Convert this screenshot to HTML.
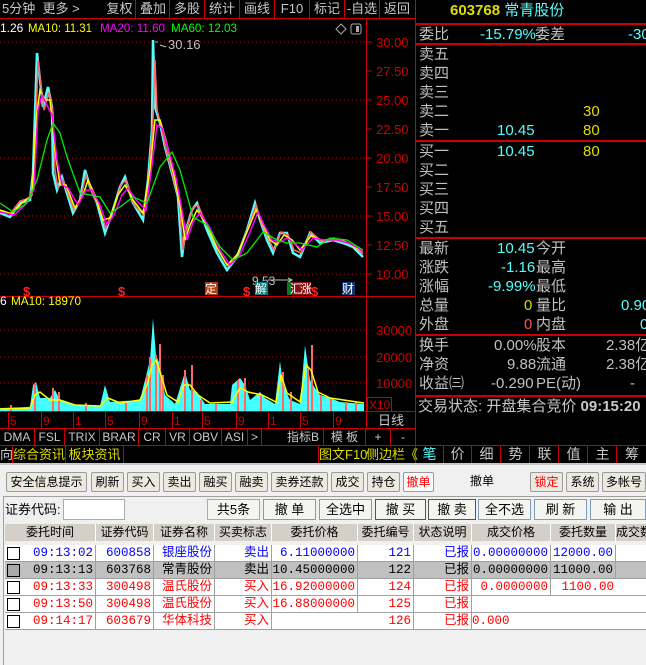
<!DOCTYPE html>
<html><head><meta charset="utf-8"><style>
*{margin:0;padding:0;box-sizing:border-box}
body{width:646px;height:665px;overflow:hidden;background:#f0f0f0;font-family:"Liberation Sans","Noto Sans CJK SC",sans-serif;position:relative}
.a{position:absolute;white-space:nowrap}
#top{position:absolute;left:0;top:0;width:646px;height:463px;background:#000;overflow:hidden}
.tb{position:absolute;top:0;height:18px;color:#c8c8c8;font-size:13px;line-height:18px;text-align:center;border-left:1px solid #c00}
.rp{position:absolute;font-size:15px;line-height:19px;color:#c0c0c0;white-space:nowrap}
.hl{position:absolute;left:416px;width:230px;height:2px;background:#c00}
.cy{color:#5ff}.ye{color:#dd0}.rd{color:#f55}
.it{position:absolute;top:429px;height:16px;font-size:12px;line-height:16px;color:#c8c8c8;text-align:center;border-right:1px solid #c00}
.rt{position:absolute;top:446px;height:17px;width:28px;font-size:14px;line-height:17px;color:#c8c8c8;text-align:center;border-right:1px solid #c00}
.btn{position:absolute;top:472px;height:20px;font-size:12px;line-height:18px;text-align:center;background:#ece9e0;border:1px solid #9a9a9a;border-radius:2px;color:#000}
.b2{position:absolute;top:499px;height:21px;font-size:13px;line-height:19px;text-align:center;background:#f4f4f0;border:1px solid #7f9db9;color:#000}
.hd{position:absolute;top:524px;height:17px;font-size:12px;line-height:17px;text-align:center;color:#000;border-right:1px solid #fff}
.row{position:absolute;left:5px;width:641px;height:17px;border-bottom:1px solid #a0a0a0}
.c{position:absolute;top:0;height:17px;font-size:12.5px;line-height:17px;text-align:right;padding-right:2px;border-right:1px solid #a0a0a0;font-family:"Liberation Mono","Noto Sans CJK SC",monospace;white-space:nowrap}
.cb{position:absolute;left:2px;top:2px;width:13px;height:13px;border:1px solid #000;background:#fff}
</style></head><body>
<div id="top">
<div class="a" style="left:2px;top:0;font-size:13px;line-height:18px;color:#c8c8c8">5分钟&nbsp;&nbsp;更多 &gt;</div>
<div class="tb" style="left:103px;width:33px;border-left:none">复权</div>
<div class="tb" style="left:135px;width:35px">叠加</div>
<div class="tb" style="left:169px;width:35px">多股</div>
<div class="tb" style="left:204px;width:35px">统计</div>
<div class="tb" style="left:239px;width:35px">画线</div>
<div class="tb" style="left:274px;width:35px">F10</div>
<div class="tb" style="left:309px;width:35px">标记</div>
<div class="tb" style="left:344px;width:35px">-自选</div>
<div class="tb" style="left:379px;width:35px">返回</div>
<div class="a" style="left:0;top:18px;width:416px;height:1px;background:#c00"></div>

<svg class="a" style="left:0;top:0" width="416" height="463">
<g stroke="#c00" stroke-dasharray="1,3" stroke-width="1">
<line x1="0" y1="42" x2="366" y2="42"/><line x1="0" y1="100" x2="366" y2="100"/><line x1="0" y1="158" x2="366" y2="158"/><line x1="0" y1="216" x2="366" y2="216"/><line x1="0" y1="274" x2="366" y2="274"/>
<line x1="0" y1="330" x2="366" y2="330"/><line x1="0" y1="357" x2="366" y2="357"/><line x1="0" y1="383" x2="366" y2="383"/>
</g>
<g stroke="#c00" stroke-width="1">
<line x1="366.5" y1="18" x2="366.5" y2="428"/><line x1="415.5" y1="0" x2="415.5" y2="463"/>
<line x1="0" y1="296.5" x2="416" y2="296.5"/><line x1="0" y1="411.5" x2="416" y2="411.5"/><line x1="0" y1="428.5" x2="416" y2="428.5"/><line x1="0" y1="445.5" x2="416" y2="445.5"/>
<line x1="366" y1="42" x2="372" y2="42"/><line x1="366" y1="71" x2="372" y2="71"/><line x1="366" y1="100" x2="372" y2="100"/><line x1="366" y1="129" x2="372" y2="129"/><line x1="366" y1="158" x2="372" y2="158"/><line x1="366" y1="187" x2="372" y2="187"/><line x1="366" y1="216" x2="372" y2="216"/><line x1="366" y1="245" x2="372" y2="245"/><line x1="366" y1="274" x2="372" y2="274"/>
<rect x="367.5" y="397.5" width="24" height="14" fill="none"/>
<g stroke-width="1"><line x1="8.5" y1="412" x2="8.5" y2="428"/><line x1="41.5" y1="412" x2="41.5" y2="428"/><line x1="73.5" y1="412" x2="73.5" y2="428"/><line x1="105.5" y1="412" x2="105.5" y2="428"/><line x1="139.5" y1="412" x2="139.5" y2="428"/><line x1="172.5" y1="412" x2="172.5" y2="428"/><line x1="202.5" y1="412" x2="202.5" y2="428"/><line x1="236.5" y1="412" x2="236.5" y2="428"/><line x1="268.5" y1="412" x2="268.5" y2="428"/><line x1="300.5" y1="412" x2="300.5" y2="428"/><line x1="333.5" y1="412" x2="333.5" y2="428"/></g>
</g>
<g fill="#c00" font-size="13" font-family="Liberation Sans">
<text x="376" y="47">30.00</text><text x="376" y="76">27.50</text><text x="376" y="105">25.00</text><text x="376" y="134">22.50</text><text x="376" y="163">20.00</text><text x="376" y="192">17.50</text><text x="376" y="221">15.00</text><text x="376" y="250">12.50</text><text x="376" y="279">10.00</text>
<text x="376" y="335">30000</text><text x="376" y="362">20000</text><text x="376" y="388">10000</text>
<text x="369" y="409" font-size="12">X10</text>
<text x="10" y="425" font-size="12">5</text><text x="43" y="425" font-size="12">9</text><text x="75" y="425" font-size="12">1</text><text x="107" y="425" font-size="12">5</text><text x="141" y="425" font-size="12">9</text><text x="174" y="425" font-size="12">1</text><text x="204" y="425" font-size="12">5</text><text x="238" y="425" font-size="12">9</text><text x="270" y="425" font-size="12">1</text><text x="302" y="425" font-size="12">5</text><text x="335" y="425" font-size="12">9</text>
</g>
<text x="378" y="425" fill="#c8c8c8" font-size="13" font-family="Noto Sans CJK SC">日线</text>
<g font-size="12" font-family="Liberation Sans">
<text x="0" y="32" fill="#fff">1.26</text>
<text x="28" y="32" fill="#ff0" textLength="64" lengthAdjust="spacingAndGlyphs">MA10: 11.31</text>
<text x="100" y="32" fill="#f0f" textLength="65" lengthAdjust="spacingAndGlyphs">MA20: 11.60</text>
<text x="171" y="32" fill="#0f0" textLength="66" lengthAdjust="spacingAndGlyphs">MA60: 12.03</text>
<text x="168" y="49" fill="#c0c0c0" font-size="13">30.16</text>
<text x="0" y="305" fill="#fff">6</text><text x="11" y="305" fill="#ff0" textLength="70" lengthAdjust="spacingAndGlyphs">MA10: 18970</text>
<text x="252" y="285" fill="#c0c0c0">9.53</text>
</g>
<polygon points="336,29 341,24 346,29 341,34" fill="none" stroke="#aaa"/>
<rect x="351" y="24" width="10" height="10" rx="2" fill="none" stroke="#aaa"/><rect x="356" y="26" width="3" height="6" fill="#aaa"/>
<path d="M155 42 L158 42 M160 45 L166 47" stroke="#c0c0c0"/>
<path d="M268 280 L292 280 M288 278 L292 280 L288 282" stroke="#c0c0c0" fill="none"/>
<polyline fill="none" stroke="#5ff" stroke-width="2.5" points="0,213 10,217 20,203 30,200 33,173 37,53 40,80 43,107 48,87 52,107 53,173 57,190 62,177 73,213 80,200 85,170 90,187 97,203 105,233 112,213 120,187 125,177 133,203 143,220 148,180 152,130 153,40 155,107 160,123 165,147 173,177 178,197 182,257 185,233 192,210 197,203 207,230 217,253 227,270 237,257 247,230 255,203 260,220 267,240 273,253 280,233 287,233 293,253 300,257 310,233 320,243 333,240 343,243 353,247 363,257"/>
<polyline fill="none" stroke="#f66" stroke-width="1.5" points="0,211 10,214 20,201 30,198 34,175 38,60 41,85 44,110 49,92 53,112 55,170 58,188 63,180 74,210 81,197 86,175 91,190 98,205 106,228 113,210 121,185 126,180 134,205 144,215 149,175 153,120 155,60 157,110 161,125 166,150 174,180 179,200 183,250 186,230 193,208 198,205 208,228 218,250 228,266 238,253 248,228 256,205 261,222 268,238 274,250 281,232 288,235 294,250 301,253 311,232 321,241 334,238 344,241 354,246 363,254"/>
<polyline fill="none" stroke="#ff0" stroke-width="1.5" points="0,210 12,214 22,203 32,195 36,120 40,90 45,100 50,100 55,150 60,185 66,185 75,208 83,195 88,180 95,195 103,220 110,218 118,195 125,185 133,200 143,213 150,170 155,120 160,120 166,140 174,175 180,205 185,240 190,225 197,210 207,225 217,248 227,265 237,255 247,232 256,210 262,222 270,240 277,245 284,235 292,240 300,250 311,236 322,240 335,240 346,242 356,248 363,252"/>
<polyline fill="none" stroke="#f0f" stroke-width="1.5" points="0,212 14,215 25,205 34,190 38,110 42,95 47,105 52,115 57,160 62,185 68,188 78,205 86,190 92,190 100,205 107,225 114,215 122,195 128,188 136,200 146,210 152,165 157,125 162,128 168,148 176,178 182,210 187,240 193,222 200,213 210,228 220,250 230,265 240,255 250,232 258,212 264,225 272,240 280,242 287,238 294,243 302,250 313,238 324,240 337,240 348,243 358,248 363,252"/>
<polyline fill="none" stroke="#0e0" stroke-width="1.3" points="0,203 13,212 27,203 37,180 47,140 53,123 60,133 67,157 80,193 100,197 110,213 120,207 133,197 147,203 160,167 172,152 180,170 193,217 207,225 220,247 233,260 247,253 263,232 277,240 287,243 300,243 317,247 330,238 347,240 363,250"/>
<g font-size="13" font-weight="bold" fill="#f22" font-family="Liberation Sans"><text x="23" y="296">$</text><text x="118" y="296">$</text><text x="243" y="296">$</text><text x="311" y="296">$</text></g>
<rect x="205" y="282" width="13" height="13" fill="#b33d0f"/><rect x="255" y="282" width="13" height="13" fill="#0a7a7a"/><rect x="287" y="282" width="5" height="13" fill="#0a7a20"/><rect x="291" y="282" width="20" height="13" fill="#8a1010"/><rect x="342" y="282" width="13" height="13" fill="#13366e"/>
<g font-size="12" fill="#fff" font-family="Noto Sans CJK SC"><text x="205" y="293">定</text><text x="255" y="293">解</text><text x="290" y="293">汇</text><text x="300" y="293">涨</text><text x="342" y="293">财</text></g>
<polygon fill="#4ff" points="0,411 0,408 30,407 33,385 36,382 40,398 50,398 55,390 60,400 70,404 100,406 105,385 110,402 140,400 145,380 150,360 153,318 156,355 160,365 165,395 175,404 180,388 185,372 190,390 197,392 205,404 230,404 232,385 240,378 245,385 250,400 260,392 265,398 275,404 280,361 283,385 290,400 300,404 305,345 310,380 315,388 320,395 330,398 340,402 364,404 364,411"/>
<g fill="#f66"><rect x="34" y="384" width="2" height="27"/><rect x="52" y="388" width="2" height="23"/><rect x="58" y="392" width="2" height="19"/><rect x="146" y="375" width="2" height="36"/><rect x="149" y="357" width="2" height="54"/><rect x="155" y="355" width="2" height="56"/><rect x="159" y="344" width="2" height="67"/><rect x="162" y="375" width="2" height="36"/><rect x="184" y="370" width="2" height="41"/><rect x="191" y="365" width="2" height="46"/><rect x="237" y="380" width="2" height="31"/><rect x="244" y="378" width="2" height="33"/><rect x="282" y="372" width="2" height="39"/><rect x="290" y="392" width="2" height="19"/><rect x="311" y="345" width="2" height="66"/><rect x="307" y="368" width="2" height="43"/><rect x="320" y="395" width="2" height="16"/><rect x="330" y="398" width="2" height="13"/><rect x="345" y="402" width="2" height="9"/><rect x="355" y="402" width="2" height="9"/><rect x="10" y="405" width="2" height="6"/><rect x="85" y="403" width="2" height="8"/><rect x="125" y="403" width="2" height="8"/><rect x="200" y="400" width="2" height="11"/><rect x="215" y="404" width="2" height="7"/><rect x="260" y="395" width="2" height="16"/></g>
<polyline fill="none" stroke="#ff0" stroke-width="1.5" points="0,409 30,408 35,395 40,392 50,400 60,400 75,405 100,406 108,398 120,403 140,400 147,385 152,365 156,360 160,372 167,395 178,402 184,385 190,385 198,395 210,403 232,402 240,388 248,392 262,395 276,402 281,375 287,393 300,402 306,365 311,370 318,392 330,398 364,403"/>
</svg>

<div class="it" style="left:0;width:35px">DMA</div><div class="it" style="left:35px;width:30px">FSL</div><div class="it" style="left:65px;width:35px">TRIX</div><div class="it" style="left:100px;width:39px">BRAR</div><div class="it" style="left:139px;width:27px">CR</div><div class="it" style="left:166px;width:24px">VR</div><div class="it" style="left:190px;width:32px">OBV</div><div class="it" style="left:222px;width:26px">ASI</div><div class="it" style="left:248px;width:14px">&gt;</div><div class="it" style="left:262px;width:62px;text-align:right;padding-right:4px">指标B</div><div class="it" style="left:324px;width:42px">模 板</div><div class="it" style="left:366px;width:25px">+</div><div class="it" style="left:391px;width:25px">-</div>
<div class="a" style="left:0;top:446px;font-size:13px;line-height:17px;color:#c8c8c8">向</div>
<div class="a" style="left:12px;top:446px;width:54px;height:17px;border-left:1px solid #c00;border-right:1px solid #c00;font-size:13px;line-height:17px;color:#dd0;text-align:center">综合资讯</div>
<div class="a" style="left:66px;top:446px;width:58px;height:17px;border-right:1px solid #c00;font-size:13px;line-height:17px;color:#dd0;text-align:center">板块资讯</div>
<div class="a" style="left:318px;top:446px;width:48px;height:17px;border-left:1px solid #c00;font-size:13px;line-height:17px;color:#dd0;text-align:center">图文F10</div>
<div class="a" style="left:366px;top:446px;font-size:13px;line-height:17px;color:#dd0">侧边栏《</div>
<div class="rt" style="left:416px;color:#5ff">笔</div><div class="rt" style="left:444px">价</div><div class="rt" style="left:473px">细</div><div class="rt" style="left:502px">势</div><div class="rt" style="left:531px">联</div><div class="rt" style="left:560px">值</div><div class="rt" style="left:589px">主</div><div class="rt" style="left:618px;border-right:none">筹</div>
<div class="a" style="left:416px;top:445px;width:230px;height:1px;background:#c00"></div>

<div class="a" style="left:450px;top:1px;font-size:15px;line-height:20px"><span class="ye" style="font-weight:bold">603768</span> <span class="cy">常青股份</span></div>
<div class="hl" style="top:23px"></div>
<div class="rp" style="left:419px;top:25px">委比</div><div class="rp cy" style="left:480px;top:25px">-15.79%</div><div class="rp" style="left:535px;top:25px">委差</div><div class="rp cy" style="left:628px;top:25px">-30</div>
<div class="hl" style="top:43px"></div>
<div class="rp" style="left:419px;top:45px;line-height:19px">卖五<br>卖四<br>卖三<br>卖二<br>卖一</div>
<div class="rp ye" style="left:583px;top:102px">30</div>
<div class="rp cy" style="left:497px;top:121px">10.45</div><div class="rp ye" style="left:583px;top:121px">80</div>
<div class="hl" style="top:140px"></div>
<div class="rp" style="left:419px;top:142px">买一<br>买二<br>买三<br>买四<br>买五</div>
<div class="rp cy" style="left:497px;top:142px">10.45</div><div class="rp ye" style="left:583px;top:142px">80</div>
<div class="hl" style="top:237px"></div>
<div class="rp" style="left:419px;top:239px">最新<br>涨跌<br>涨幅<br>总量<br>外盘</div>
<div class="rp" style="left:536px;top:239px">今开<br>最高<br>最低<br>量比<br>内盘</div>
<div class="rp cy" style="left:497px;top:239px">10.45</div>
<div class="rp cy" style="left:501px;top:258px">-1.16</div>
<div class="rp cy" style="left:488px;top:277px">-9.99%</div>
<div class="rp ye" style="left:524px;top:296px">0</div><div class="rp cy" style="left:621px;top:296px">0.90</div>
<div class="rp rd" style="left:524px;top:315px">0</div><div class="rp cy" style="left:640px;top:315px">0</div>
<div class="hl" style="top:334px"></div>
<div class="rp" style="left:419px;top:336px">换手<br>净资<br>收益㈢</div>
<div class="rp" style="left:536px;top:336px">股本<br>流通<br>PE(动)</div>
<div class="rp" style="left:494px;top:336px">0.00%</div><div class="rp" style="left:507px;top:355px">9.88</div><div class="rp" style="left:491px;top:374px">-0.290</div>
<div class="rp" style="left:606px;top:336px">2.38亿</div><div class="rp" style="left:606px;top:355px">2.38亿</div><div class="rp" style="left:630px;top:374px">-</div>
<div class="hl" style="top:395px"></div>
<div class="rp" style="left:418px;top:397px;color:#c8c8c8">交易状态: 开盘集合竞价 <b>09:15:20</b></div>
</div>

<div class="a" style="left:0;top:463px;width:646px;height:2px;background:#c8c8c8"></div>
<div class="btn" style="left:6px;width:81px">安全信息提示</div>
<div class="btn" style="left:91px;width:33px">刷新</div>
<div class="btn" style="left:127px;width:33px">买入</div>
<div class="btn" style="left:163px;width:33px">卖出</div>
<div class="btn" style="left:199px;width:33px">融买</div>
<div class="btn" style="left:235px;width:33px">融卖</div>
<div class="btn" style="left:271px;width:57px">卖券还款</div>
<div class="btn" style="left:331px;width:33px">成交</div>
<div class="btn" style="left:367px;width:33px">持仓</div>
<div class="btn" style="left:403px;width:31px;color:#f00;background:#fff">撤单</div>
<div class="a" style="left:470px;top:472px;font-size:12px;line-height:18px">撤单</div>
<div class="btn" style="left:530px;width:33px;color:#f00">锁定</div>
<div class="btn" style="left:566px;width:33px">系统</div>
<div class="btn" style="left:602px;width:44px">多帐号</div>
<div class="a" style="left:3px;top:496px;width:643px;height:1px;background:#a0a0a0"></div>
<div class="a" style="left:3px;top:496px;width:1px;height:169px;background:#a0a0a0"></div>
<div class="a" style="left:5px;top:500px;font-size:13px;line-height:19px">证券代码:</div>
<div class="a" style="left:63px;top:499px;width:62px;height:21px;background:#fff;border:1px solid #aaa"></div>
<div class="b2" style="left:207px;width:53px;border-color:#aaa">共5条</div>
<div class="b2" style="left:263px;width:53px">撤 单</div>
<div class="b2" style="left:319px;width:53px">全选中</div>
<div class="b2" style="left:375px;width:51px;border-color:#555">撤 买</div>
<div class="b2" style="left:428px;width:48px;border-color:#555">撤 卖</div>
<div class="b2" style="left:478px;width:53px">全不选</div>
<div class="b2" style="left:534px;width:53px">刷 新</div>
<div class="b2" style="left:590px;width:56px">输 出</div>
<div class="a" style="left:5px;top:524px;width:641px;height:17px;background:#d4d0c8"></div>
<div class="hd" style="left:5px;width:91px">委托时间</div><div class="hd" style="left:96px;width:58px">证券代码</div><div class="hd" style="left:154px;width:61px">证券名称</div><div class="hd" style="left:215px;width:57px">买卖标志</div><div class="hd" style="left:272px;width:86px">委托价格</div><div class="hd" style="left:358px;width:56px">委托编号</div><div class="hd" style="left:414px;width:58px">状态说明</div><div class="hd" style="left:472px;width:79px">成交价格</div><div class="hd" style="left:551px;width:65px">委托数量</div><div class="hd" style="left:616px;width:40px;text-align:left">成交数</div>

<div class="row" style="top:545px;background:#fff;color:#00f"><div class="cb"></div><div class="c" style="left:18px;width:73px">09:13:02</div><div class="c" style="left:91px;width:58px">600858</div><div class="c" style="left:149px;width:61px">银座股份</div><div class="c" style="left:210px;width:57px">卖出</div><div class="c" style="left:267px;width:86px">6.11000000</div><div class="c" style="left:353px;width:56px">121</div><div class="c" style="left:409px;width:58px">已报</div><div class="c" style="left:467px;width:79px">0.00000000</div><div class="c" style="left:546px;width:65px">12000.00</div></div>
<div class="row" style="top:562px;background:#c0c0c0;color:#000"><div class="cb" style="background:#aaa"></div><div class="c" style="left:18px;width:73px">09:13:13</div><div class="c" style="left:91px;width:58px">603768</div><div class="c" style="left:149px;width:61px">常青股份</div><div class="c" style="left:210px;width:57px">卖出</div><div class="c" style="left:267px;width:86px">10.45000000</div><div class="c" style="left:353px;width:56px">122</div><div class="c" style="left:409px;width:58px">已报</div><div class="c" style="left:467px;width:79px">0.00000000</div><div class="c" style="left:546px;width:65px">11000.00</div></div>
<div class="row" style="top:579px;background:#fff;color:#f00"><div class="cb"></div><div class="c" style="left:18px;width:73px">09:13:33</div><div class="c" style="left:91px;width:58px">300498</div><div class="c" style="left:149px;width:61px">温氏股份</div><div class="c" style="left:210px;width:57px">买入</div><div class="c" style="left:267px;width:86px">16.92000000</div><div class="c" style="left:353px;width:56px">124</div><div class="c" style="left:409px;width:58px">已报</div><div class="c" style="left:467px;width:79px">0.0000000</div><div class="c" style="left:546px;width:65px;border:none">1100.00</div></div>
<div class="row" style="top:596px;background:#fff;color:#f00"><div class="cb"></div><div class="c" style="left:18px;width:73px">09:13:50</div><div class="c" style="left:91px;width:58px">300498</div><div class="c" style="left:149px;width:61px">温氏股份</div><div class="c" style="left:210px;width:57px">买入</div><div class="c" style="left:267px;width:86px">16.88000000</div><div class="c" style="left:353px;width:56px">125</div><div class="c" style="left:409px;width:58px">已报</div></div>
<div class="row" style="top:613px;background:#fff;color:#f00"><div class="cb"></div><div class="c" style="left:18px;width:73px">09:14:17</div><div class="c" style="left:91px;width:58px">603679</div><div class="c" style="left:149px;width:61px">华体科技</div><div class="c" style="left:210px;width:57px">买入</div><div class="c" style="left:353px;width:56px;border-left:none">126</div><div class="c" style="left:409px;width:58px">已报</div><div class="c" style="left:467px;width:79px;text-align:left;border:none">0.000</div></div>
</body></html>
